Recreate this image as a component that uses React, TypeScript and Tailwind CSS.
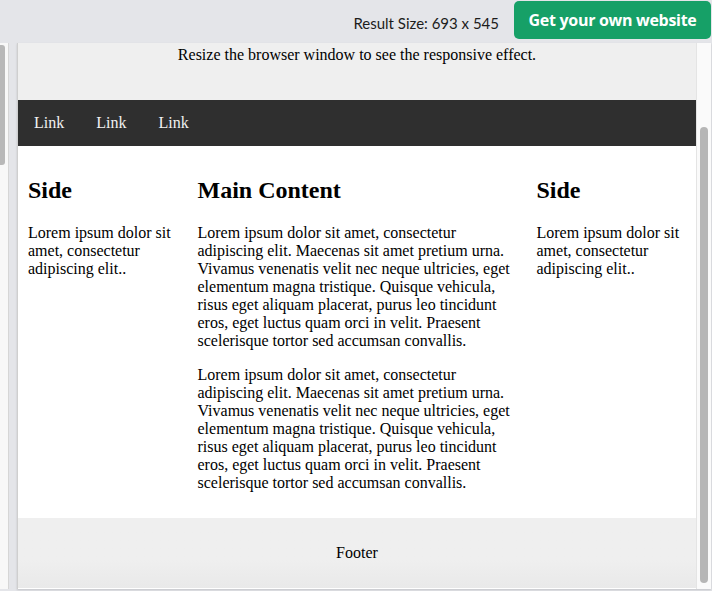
const lorem =
  "Lorem ipsum dolor sit amet, consectetur adipiscing elit. Maecenas sit amet pretium urna. Vivamus venenatis velit nec neque ultricies, eget elementum magna tristique. Quisque vehicula, risus eget aliquam placerat, purus leo tincidunt eros, eget luctus quam orci in velit. Praesent scelerisque tortor sed accumsan convallis.";

function Side() {
  return (
    <div className="w-1/4 p-[10px]">
      <h2 className="text-[24px] font-bold leading-[28px] my-[20px]">Side</h2>
      <p className="my-[16px]">Lorem ipsum dolor sit amet, consectetur adipiscing elit..</p>
    </div>
  );
}

export default function App() {
  return (
    <div className="w-[712px] h-[591px] bg-[#e4e5e9] flex flex-col overflow-hidden">
      {/* Top bar */}
      <div className="h-[43px] flex items-start justify-end pt-[1px] pr-[1px]">
        <span className="mt-[11px] mr-[15px] text-[15px] text-[#1c1c1c] font-['Lato','Open_Sans',sans-serif]">
          Result Size: 693 x 545
        </span>
        <a
          href="#"
          className="h-[38px] w-[197px] rounded-[5px] bg-[#16a067] text-white font-bold text-[16px] flex items-center justify-center font-['Open_Sans','Noto_Sans',sans-serif] tracking-[-0.3px]"
        >
          Get your own website
        </a>
      </div>

      <div className="h-[546px] flex">
        {/* Code panel scroll edge */}
        <div className="w-[9px] bg-[#f8f8f8] border-r border-[#d6d6d6] pt-[2px]">
          <div className="w-[5px] h-[120px] rounded-r-[3px] bg-[#b8b8b8]" />
        </div>
        <div className="w-[8px]" />

        {/* Result frame */}
        <div className="flex border-l border-[#cfcfcf] bg-white shadow-[0_1px_2px_rgba(0,0,0,0.15)]">
          <div className="w-[678px] overflow-hidden font-['Liberation_Serif','Times_New_Roman',serif] text-[16px] leading-[18px] text-black">
            <div className="h-[57px] bg-[#efefef] text-center pt-[3px]">
              Resize the browser window to see the responsive effect.
            </div>
            <nav className="bg-[#2f2f2f] flex">
              {["Link", "Link", "Link"].map((l, i) => (
                <a key={i} href="#" className="px-[16px] py-[14px] text-[#f2f2f2]">
                  {l}
                </a>
              ))}
            </nav>
            <div className="flex">
              <Side />
              <div className="w-1/2 p-[10px]">
                <h2 className="text-[24px] font-bold leading-[28px] my-[20px]">Main Content</h2>
                <p className="my-[16px]">{lorem}</p>
                <p className="my-[16px]">{lorem}</p>
              </div>
              <Side />
            </div>
            <div className="bg-gradient-to-b from-[#efefef] from-60% to-[#e9e9e9] text-center p-[10px]">
              <p className="my-[16px]">Footer</p>
            </div>
          </div>
          <div className="w-[15px] bg-[#fafafa] border-l border-[#e4e4e4] pt-[84px]">
            <div className="mx-auto w-[8px] h-[456px] rounded-full bg-[#b6b6b6]" />
          </div>
        </div>
      </div>
    </div>
  );
}
